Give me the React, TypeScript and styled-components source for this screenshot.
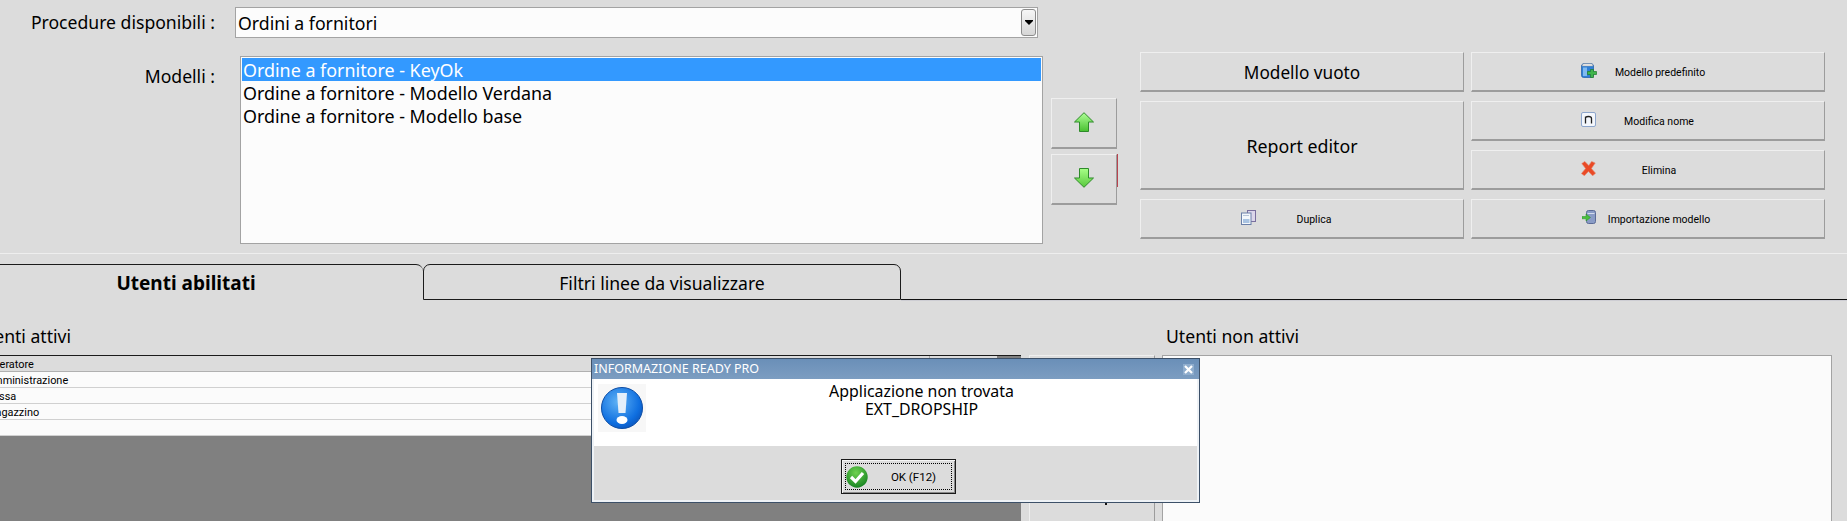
import React from "react";
import styled, { createGlobalStyle } from "styled-components";

const Global = createGlobalStyle`
  html, body { margin: 0; padding: 0; background: #dcdcdc; }
  * { box-sizing: border-box; }
`;

const FONT = `"Noto Sans", "DejaVu Sans", sans-serif`;
const SMALL_FONT = `Roboto, "Noto Sans", sans-serif`;

const Page = styled.div`
  position: relative;
  width: 1847px;
  height: 521px;
  overflow: hidden;
  background: #dcdcdc;
  font-family: ${FONT};
  color: #000;
`;

const Top = styled.section`
  height: 253px;
  padding-top: 7px;
`;

const ComboRow = styled.div`
  display: flex;
  height: 31px;
`;

const FieldLabel = styled.div<{ $top?: number }>`
  width: 215px;
  flex: none;
  text-align: right;
  font-size: 17.6px;
  line-height: 30px;
  padding-top: ${(p) => p.$top ?? 0}px;
  white-space: nowrap;
`;

const Combo = styled.div`
  margin-left: 20px;
  width: 803px;
  height: 31px;
  background: #fcfcfc;
  border: 1px solid #a3a3a3;
  display: flex;
  align-items: center;
  justify-content: space-between;
  padding: 0 1px 0 2px;
  font-size: 17.7px;
`;

const ComboButton = styled.div`
  width: 15px;
  height: 27px;
  border: 1px solid #8c8c8c;
  border-radius: 3px;
  background: linear-gradient(#f6f6f6, #d6d6d6);
  display: flex;
  align-items: center;
  justify-content: center;
  &::after {
    content: "";
    width: 0;
    height: 0;
    border-left: 4px solid transparent;
    border-right: 4px solid transparent;
    border-top: 4px solid #000;
    box-shadow: 0 -1px 0 #000;
  }
`;

const MainRow = styled.div`
  display: flex;
  margin-top: 18px;
  align-items: flex-start;
`;

const ListBox = styled.div`
  margin-left: 25px;
  width: 803px;
  height: 188px;
  background: #fcfcfc;
  border: 1px solid #a3a3a3;
  padding: 1px;
  flex: none;
`;

const ListRow = styled.div<{ $selected?: boolean }>`
  height: 23px;
  line-height: 23px;
  padding: 1px 0 0 1px;
  font-size: 17.9px;
  white-space: nowrap;
  background: ${(p) => (p.$selected ? "#3399ff" : "transparent")};
  color: ${(p) => (p.$selected ? "#fff" : "#000")};
`;

const ArrowColumn = styled.div`
  margin: 42px 0 0 8px;
  width: 66px;
  flex: none;
  display: flex;
  flex-direction: column;
  gap: 5px;
`;

const FlatButton = styled.div`
  position: relative;
  background: #dcdcdc;
  border-style: solid;
  border-width: 1px 1px 2px 1px;
  border-color: #efefef #9c9c9c #9c9c9c #efefef;
  display: flex;
  align-items: center;
`;

const ArrowButton = styled(FlatButton)`
  height: 51px;
  justify-content: center;
  svg { margin-top: -3px; }
`;

const RedMark = styled.span`
  position: absolute;
  right: -2px;
  top: -1px;
  width: 1px;
  height: 33px;
  background: #b8434f;
`;

const ButtonGrid = styled.div`
  margin: -4px 0 0 23px;
  display: grid;
  grid-template-columns: 324px 354px;
  grid-template-rows: repeat(4, 40px);
  column-gap: 7px;
  row-gap: 9px;
`;

const LargeButton = styled(FlatButton)<{ $span?: number; $size: number }>`
  justify-content: center;
  font-size: ${(p) => p.$size}px;
  padding-top: 2px;
  grid-row: span ${(p) => p.$span ?? 1};
  grid-column: 1;
`;

const IconButton = styled(FlatButton)<{ $col: number; $offset: number; $label: number }>`
  grid-column: ${(p) => p.$col};
  font-family: ${SMALL_FONT};
  font-size: 10.5px;
  padding-left: ${(p) => p.$offset}px;
  svg { flex: none; margin-top: -3px; }
  span { width: ${(p) => p.$label}px; padding-top: 2px; text-align: center; white-space: nowrap; }
`;

const TabBar = styled.div`
  border-top: 1px solid #eeeeee;
  height: 47px;
  padding-top: 10px;
  display: flex;
  align-items: stretch;
  position: relative;
  &::after {
    content: "";
    position: absolute;
    left: 901px;
    right: 0;
    bottom: 0;
    height: 1px;
    background: #111;
    box-shadow: 0 1px 0 #cdcdd3;
  }
`;

const ActiveTab = styled.div`
  margin-left: -51px;
  width: 474px;
  flex: none;
  height: 36px;
  border-top: 1px solid #1b1b1b;
  border-top-right-radius: 7px;
  text-align: center;
  font-size: 19px;
  font-weight: 700;
  line-height: 37px;
`;

const Tab = styled.div`
  width: 478px;
  flex: none;
  height: 36px;
  border: 1px solid #1b1b1b;
  border-top-left-radius: 7px;
  border-top-right-radius: 7px;
  text-align: center;
  font-size: 17.6px;
  line-height: 36px;
`;

const Lower = styled.section`
  display: grid;
  grid-template-columns: 1021px 8px 126px 7px 670px;
  grid-template-rows: 55px 1fr;
  height: 221px;
`;

const PanelTitle = styled.div<{ $col: number; $shift?: number }>`
  grid-column: ${(p) => p.$col};
  font-size: 17.6px;
  line-height: 20px;
  padding-top: 26px;
  margin-left: ${(p) => p.$shift ?? 0}px;
  white-space: nowrap;
  height: 55px;
`;

const UserGrid = styled.div`
  grid-row: 2;
  grid-column: 1;
  background: #808080;
  border-top: 1px solid #1b1b1b;
  font-family: ${SMALL_FONT};
  font-size: 10.9px;
  overflow: hidden;
`;

const GridRow = styled.div<{ $head?: boolean }>`
  height: 16px;
  line-height: 17px;
  width: 997px;
  background: ${(p) =>
    p.$head
      ? "linear-gradient(to right, #dcdcdc 929px, #a8a8a8 929px, #a8a8a8 930px, #dcdcdc 930px)"
      : "#fbfbfb"};
  border-bottom: 1px solid ${(p) => (p.$head ? "#b0b0b0" : "#d0d0d0")};
  white-space: nowrap;
  overflow: hidden;
`;

const GridCell = styled.span`
  display: block;
  margin-left: -14px;
`;

const MoveButton = styled(FlatButton)`
  grid-row: 2;
  grid-column: 3;
  height: 170px;
`;

const MoveMark = styled.span`
  position: absolute;
  left: 75px;
  top: 147px;
  width: 2px;
  height: 2px;
  background: #111;
`;

const RightList = styled.div`
  grid-row: 2;
  grid-column: 5;
  background: #fbfbfb;
  border: 1px solid #a3a3a3;
  border-bottom: 0;
  height: 170px;
`;

const Dialog = styled.div`
  position: absolute;
  left: 591px;
  top: 358px;
  width: 609px;
  height: 145px;
  border: 1px solid #3c5068;
  background: #eef2f6;
  padding: 0 2px 2px;
  display: flex;
  flex-direction: column;
`;

const TitleBar = styled.div`
  margin: 0 -2px;
  height: 20px;
  background: linear-gradient(#6a8fb8, #7c9dc1);
  color: #fff;
  font-size: 12.5px;
  line-height: 24px;
  padding: 0 5px 0 2px;
  display: flex;
  justify-content: space-between;
  align-items: center;
`;

const CloseBox = styled.div`
  width: 11px;
  height: 11px;
  background: #8fadcd;
  display: flex;
  align-items: center;
  justify-content: center;
`;

const DialogBody = styled.div`
  height: 67px;
  background: #fff;
  display: flex;
  position: relative;
`;

const DialogIcon = styled.div`
  flex: none;
  width: 48px;
  height: 48px;
  margin: 5px 0 0 4px;
  background: #f7f7f7;
  display: flex;
  align-items: center;
  justify-content: center;
`;

const DialogText = styled.div`
  flex: 1;
  text-align: center;
  font-size: 15.9px;
  line-height: 18px;
  padding-top: 3px;
`;

const DialogFooter = styled.div`
  flex: 1;
  background: #dcdcdc;
  display: flex;
  justify-content: center;
  padding-top: 13px;
`;

const OkButton = styled.div`
  width: 115px;
  height: 35px;
  border: 1px solid #1a1a1a;
  background: #dcdcdc;
  box-shadow: inset 1px 1px 0 #f5f5f5, inset -1px -1px 0 #8a8a8a;
  padding: 3px;
  margin-left: 6px;
`;

const OkFocus = styled.div`
  height: 100%;
  border: 1px dotted #000;
  display: flex;
  align-items: center;
  font-family: ${SMALL_FONT};
  font-size: 11.5px;
  span { flex: 1; text-align: center; padding-left: 8px; }
`;

const ArrowIcon = ({ down }: { down?: boolean }) => (
  <svg width="20" height="20" viewBox="0 0 20 20">
    <defs>
      <linearGradient id={down ? "ad" : "au"} x1="0" y1="0" x2="0" y2="1">
        <stop offset="0" stopColor={down ? "#58c83c" : "#b0ff98"} />
        <stop offset="1" stopColor={down ? "#a8ff88" : "#48c030"} />
      </linearGradient>
    </defs>
    <polygon
      transform={down ? "rotate(180 10 10)" : undefined}
      points="10,0.7 19.5,10 14.5,10 14.5,19.5 5.5,19.5 5.5,10 0.5,10"
      fill={`url(#${down ? "ad" : "au"})`}
      stroke="#2e8b2a"
      strokeWidth="1"
    />
  </svg>
);

const TemplateIcon = () => (
  <svg width="16" height="15" viewBox="0 0 16 15">
    <path d="M0.5 2.5 L2 0.5 H11 L12.5 2.5 V12.5 Q12.5 14.5 10.5 14.5 H2.5 Q0.5 14.5 0.5 12.5 Z" fill="#2f7fd6" stroke="#1d5aa6" strokeWidth="0.7" />
    <path d="M1 3 H12 L11 0.8 H2.2 Z" fill="#eeeeee" stroke="#9a9a9a" strokeWidth="0.5" />
    <rect x="2" y="4.5" width="4" height="8.5" fill="#7fbaf0" />
    <path d="M9.5 6.5 H12.5 V8.5 H15.5 V11.5 H12.5 V14.5 H9.5 V11.5 H6.5 V8.5 H9.5 Z" fill="#3fb54a" stroke="#1f7a2c" strokeWidth="0.7" />
  </svg>
);

const NameIcon = () => (
  <svg width="15" height="15" viewBox="0 0 15 15">
    <rect x="0.5" y="0.5" width="14" height="14" rx="1.5" fill="#f4f7fc" stroke="#8ea6cc" />
    <path d="M4.5 11.5 V4.5 M4.5 5.5 Q5.5 4.5 7.5 4.5 Q10.5 4.5 10.5 6.5 V11.5" fill="none" stroke="#222" strokeWidth="1.3" />
  </svg>
);

const DeleteIcon = () => (
  <svg width="15" height="15" viewBox="0 0 15 15">
    <path d="M0.8 2.6 L3.8 0.4 L7.8 4.6 L10.6 0.4 L14.2 2 L10.4 7.6 L14.6 12.2 L11.6 14.8 L7.4 10.4 L3.4 14.8 L0.4 12.6 L4.6 7.6 Z" fill="#ea4a26" stroke="#e08a70" strokeWidth="0.6" />
  </svg>
);

const CopyIcon = () => (
  <svg width="15" height="15" viewBox="0 0 15 15">
    <rect x="6.5" y="0.5" width="8" height="11" fill="#dcd6ea" stroke="#7a6f9e" />
    <rect x="0.5" y="3" width="9.5" height="11.5" fill="#f4f7fb" stroke="#6a7fa8" />
    <rect x="2" y="9" width="6.5" height="4" fill="#a9c3e2" />
    <rect x="2" y="5" width="6" height="1" fill="#b8c4d8" />
  </svg>
);

const ImportIcon = () => (
  <svg width="14" height="14" viewBox="0 0 14 14">
    <rect x="4.5" y="0.5" width="9" height="13" rx="2" fill="#8a9cc6" stroke="#5b6b96" />
    <rect x="5.5" y="3" width="7" height="1" fill="#d4dcec" />
    <path d="M0 6.5 H4 V4 L8.5 7.5 L4 11 V8.8 H0 Z" fill="#49c13d" stroke="#2b8a28" strokeWidth="0.5" />
  </svg>
);

const InfoIcon = () => (
  <svg width="42" height="42" viewBox="0 0 42 42">
    <defs>
      <radialGradient id="inf" cx="0.4" cy="0.35" r="0.75">
        <stop offset="0" stopColor="#5fb2f5" />
        <stop offset="0.7" stopColor="#0f6fe0" />
        <stop offset="1" stopColor="#0a4fb4" />
      </radialGradient>
    </defs>
    <circle cx="21" cy="21" r="20.5" fill="url(#inf)" stroke="#0d4da4" />
    <path d="M16 6 H26 L24.5 26 H17.5 Z" fill="#e4effa" />
    <ellipse cx="21" cy="33" rx="5.5" ry="4" fill="#fff" />
  </svg>
);

const CheckIcon = () => (
  <svg width="22" height="22" viewBox="0 0 22 22">
    <defs>
      <radialGradient id="chk" cx="0.45" cy="0.3" r="0.8">
        <stop offset="0" stopColor="#6fd24f" />
        <stop offset="1" stopColor="#0c7a1c" />
      </radialGradient>
    </defs>
    <circle cx="11" cy="11" r="10.7" fill="url(#chk)" />
    <path d="M5 11 L9.5 15.5 L17 7" fill="none" stroke="#fff" strokeWidth="3.2" />
  </svg>
);

const CloseGlyph = () => (
  <svg width="9" height="9" viewBox="0 0 9 9">
    <path d="M1 1 L8 8 M8 1 L1 8" stroke="#fff" strokeWidth="2.2" />
  </svg>
);

export default function App() {
  return (
    <Page>
      <Global />
      <Top>
        <ComboRow>
          <FieldLabel>Procedure disponibili :</FieldLabel>
          <Combo>
            Ordini a fornitori
            <ComboButton />
          </Combo>
        </ComboRow>
        <MainRow>
          <FieldLabel $top={5}>Modelli :</FieldLabel>
          <ListBox>
            <ListRow $selected>Ordine a fornitore - KeyOk</ListRow>
            <ListRow>Ordine a fornitore - Modello Verdana</ListRow>
            <ListRow>Ordine a fornitore - Modello base</ListRow>
          </ListBox>
          <ArrowColumn>
            <ArrowButton>
              <ArrowIcon />
            </ArrowButton>
            <ArrowButton>
              <ArrowIcon down />
              <RedMark />
            </ArrowButton>
          </ArrowColumn>
          <ButtonGrid>
            <LargeButton $size={17.2}>Modello vuoto</LargeButton>
            <IconButton $col={2} $offset={109} $label={126}>
              <TemplateIcon />
              <span>Modello predefinito</span>
            </IconButton>
            <LargeButton $span={2} $size={17.8}>Report editor</LargeButton>
            <IconButton $col={2} $offset={109} $label={126}>
              <NameIcon />
              <span>Modifica nome</span>
            </IconButton>
            <IconButton $col={2} $offset={109} $label={126}>
              <DeleteIcon />
              <span>Elimina</span>
            </IconButton>
            <IconButton $col={1} $offset={100} $label={116}>
              <CopyIcon />
              <span>Duplica</span>
            </IconButton>
            <IconButton $col={2} $offset={110} $label={126}>
              <ImportIcon />
              <span>Importazione modello</span>
            </IconButton>
          </ButtonGrid>
        </MainRow>
      </Top>
      <TabBar>
        <ActiveTab>Utenti abilitati</ActiveTab>
        <Tab>Filtri linee da visualizzare</Tab>
      </TabBar>
      <Lower>
        <PanelTitle $col={1} $shift={-25}>Utenti attivi</PanelTitle>
        <PanelTitle $col={5} $shift={4}>Utenti non attivi</PanelTitle>
        <UserGrid>
          <GridRow $head><GridCell>Operatore</GridCell></GridRow>
          <GridRow><GridCell>Amministrazione</GridCell></GridRow>
          <GridRow><GridCell>Cassa</GridCell></GridRow>
          <GridRow><GridCell>Magazzino</GridCell></GridRow>
          <GridRow />
        </UserGrid>
        <MoveButton>
          <MoveMark />
        </MoveButton>
        <RightList />
      </Lower>
      <Dialog>
        <TitleBar>
          INFORMAZIONE READY PRO
          <CloseBox><CloseGlyph /></CloseBox>
        </TitleBar>
        <DialogBody>
          <DialogIcon><InfoIcon /></DialogIcon>
          <DialogText>
            Applicazione non trovata
            <br />
            EXT_DROPSHIP
          </DialogText>
        </DialogBody>
        <DialogFooter>
          <OkButton>
            <OkFocus>
              <CheckIcon />
              <span>OK (F12)</span>
            </OkFocus>
          </OkButton>
        </DialogFooter>
      </Dialog>
    </Page>
  );
}
